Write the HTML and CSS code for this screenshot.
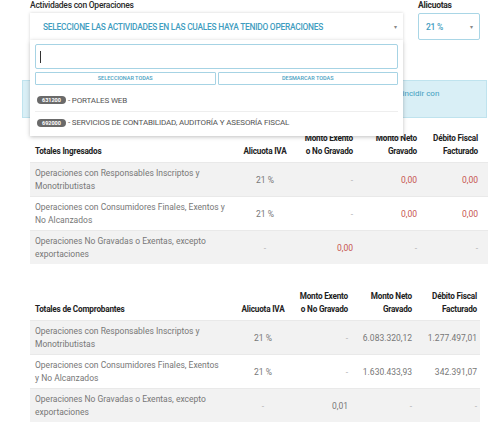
FILE: index.html
```html
<!DOCTYPE html>
<html lang="es">
<head>
<meta charset="utf-8">
<title>Actividades</title>
<link rel="stylesheet" href="styles.css">
</head>
<body>
<div class="page">
  <div class="filters">
    <div class="field field-act">
      <div class="label">Actividades con Operaciones</div>
      <div class="select select-act">
        <span class="select-text">SELECCIONE LAS ACTIVIDADES EN LAS CUALES HAYA TENIDO OPERACIONES</span>
        <span class="caret">&#9662;</span>
      </div>
      <div class="dropdown">
        <div class="search"><span class="cursor"></span></div>
        <div class="actions">
          <div class="btn">SELECCIONAR TODAS</div>
          <div class="btn">DESMARCAR TODAS</div>
        </div>
        <ul class="options">
          <li class="option"><span class="badge">631200</span><span class="opt-text">- PORTALES WEB</span></li>
          <li class="option"><span class="badge">692000</span><span class="opt-text">- SERVICIOS DE CONTABILIDAD, AUDITORÍA Y ASESORÍA FISCAL</span></li>
        </ul>
      </div>
    </div>
    <div class="field field-alic">
      <div class="label">Alicuotas</div>
      <div class="select select-alic">
        <span class="select-text">21 %</span>
        <span class="caret">&#9662;</span>
      </div>
    </div>
  </div>

  <div class="info">Los importes informados para cada una de las actividades seleccionadas en este formulario deberán coincidir con</div>

  <table class="totals t1">
    <colgroup><col class="c-desc"><col class="c-alic"><col class="c-ex"><col class="c-neto"><col class="c-deb"></colgroup>
    <thead>
      <tr>
        <th class="desc">Totales Ingresados</th>
        <th class="alic">Alicuota IVA</th>
        <th class="num">Monto Exento<br>o No Gravado</th>
        <th class="num">Monto Neto<br>Gravado</th>
        <th class="num">Débito Fiscal<br>Facturado</th>
      </tr>
    </thead>
    <tbody>
      <tr>
        <td class="desc">Operaciones con Responsables Inscriptos y<br>Monotributistas</td>
        <td class="alic">21 %</td>
        <td class="num dash">-</td>
        <td class="num red">0,00</td>
        <td class="num red">0,00</td>
      </tr>
      <tr>
        <td class="desc">Operaciones con Consumidores Finales, Exentos y<br>No Alcanzados</td>
        <td class="alic">21 %</td>
        <td class="num dash">-</td>
        <td class="num red">0,00</td>
        <td class="num red">0,00</td>
      </tr>
      <tr>
        <td class="desc">Operaciones No Gravadas o Exentas, excepto<br>exportaciones</td>
        <td class="alic dash">-</td>
        <td class="num red">0,00</td>
        <td class="num dash">-</td>
        <td class="num dash">-</td>
      </tr>
    </tbody>
  </table>

  <table class="totals t2">
    <colgroup><col class="c-desc"><col class="c-alic"><col class="c-ex"><col class="c-neto"><col class="c-deb"></colgroup>
    <thead>
      <tr>
        <th class="desc">Totales de Comprobantes</th>
        <th class="alic">Alicuota IVA</th>
        <th class="num">Monto Exento<br>o No Gravado</th>
        <th class="num">Monto Neto<br>Gravado</th>
        <th class="num">Débito Fiscal<br>Facturado</th>
      </tr>
    </thead>
    <tbody>
      <tr>
        <td class="desc">Operaciones con Responsables Inscriptos y<br>Monotributistas</td>
        <td class="alic">21 %</td>
        <td class="num dash">-</td>
        <td class="num">6.083.320,12</td>
        <td class="num">1.277.497,01</td>
      </tr>
      <tr>
        <td class="desc">Operaciones con Consumidores Finales, Exentos<br>y No Alcanzados</td>
        <td class="alic">21 %</td>
        <td class="num dash">-</td>
        <td class="num">1.630.433,93</td>
        <td class="num">342.391,07</td>
      </tr>
      <tr>
        <td class="desc">Operaciones No Gravadas o Exentas, excepto<br>exportaciones</td>
        <td class="alic dash">-</td>
        <td class="num">0,01</td>
        <td class="num dash">-</td>
        <td class="num dash">-</td>
      </tr>
    </tbody>
  </table>
</div>
</body>
</html>
```

FILE: styles.css
```css
* { box-sizing: border-box; }

body {
  margin: 0;
  background: #fff;
  font-family: Roboto, "Liberation Sans", sans-serif;
  color: #333;
}

.page {
  width: 500px;
  height: 432px;
  overflow: hidden;
}

/* ---------- filters ---------- */
.filters {
  display: flex;
  gap: 15px;
  padding-left: 30px;
}

.field { position: relative; }
.field-act { width: 373px; }
.field-alic { width: 62px; }

.label {
  font-size: 8.5px;
  line-height: 11px;
  font-weight: 500;
  color: #2a2a2a;
  letter-spacing: -0.25px;
  margin-bottom: 2px;
}
.field-alic .label { font-weight: 700; }

.select {
  height: 27px;
  display: flex;
  align-items: center;
  justify-content: space-between;
  background: #fff;
  color: #3f9dc0;
  font-size: 8.4px;
  font-weight: 500;
  letter-spacing: -0.25px;
}
.select-act {
  padding: 0 6px 0 13px;
  box-shadow: 0 0 3px rgba(0, 0, 0, 0.18);
}
.select-alic {
  padding: 0 6px 0 7px;
  border: 1px solid #a9d6e6;
  border-radius: 2px;
  font-size: 8.5px;
}
.caret {
  font-size: 6px;
  color: #888;
}

/* ---------- dropdown ---------- */
.dropdown {
  position: absolute;
  left: 0;
  top: 40px;
  width: 373px;
  height: 96px;
  background: #fff;
  box-shadow: 0 1px 4px rgba(0, 0, 0, 0.25);
  padding: 4px 5px 0;
  z-index: 5;
}
.search {
  height: 25px;
  border: 1.5px solid #a6d3e4;
  border-radius: 2px;
  display: flex;
  align-items: center;
  padding-left: 4px;
}
.cursor {
  width: 1px;
  height: 12px;
  background: #333;
}
.actions {
  display: flex;
  gap: 2px;
  margin-top: 3px;
}
.btn {
  flex: 1;
  height: 13px;
  border: 1px solid #a6d3e4;
  border-radius: 1px;
  color: #4a9fc2;
  font-size: 5.5px;
  line-height: 11px;
  text-align: center;
  font-weight: 500;
}
.options {
  list-style: none;
  margin: 0;
  padding: 0;
}
.option {
  display: flex;
  align-items: center;
  gap: 2px;
  padding-left: 2px;
  font-size: 8px;
  color: #555;
  letter-spacing: -0.15px;
  white-space: nowrap;
}
.option:first-child { height: 26px; padding-top: 4px; }
.option + .option { height: 22px; border-top: 1px solid #eee; }
.badge {
  display: inline-block;
  background: #6a6a6a;
  color: #fff;
  font-size: 5.5px;
  line-height: 8px;
  height: 8px;
  padding: 0 5px;
  border-radius: 4px;
  font-weight: 700;
  letter-spacing: 0;
}

/* ---------- info ---------- */
.info {
  margin: 40px 0 0 22px;
  width: 465px;
  height: 38px;
  background: #d9eff6;
  border: 1px solid #bfe3ee;
  color: #3f9dc0;
  font-size: 8px;
  line-height: 12px;
  padding: 7px 10px 6px;
  overflow: hidden;
  white-space: nowrap;
}

/* ---------- tables ---------- */
.totals {
  border-collapse: collapse;
  table-layout: fixed;
  margin-left: 30px;
}
.t1 { width: 458px; margin-top: 11px; }
.t2 { width: 450px; margin-top: 23px; }

.t1 .c-desc { width: 210px; }
.t1 .c-alic { width: 50px; }
.t1 .c-ex { width: 73px; }
.t1 .c-neto { width: 64px; }
.t1 .c-deb { width: 61px; }

.t2 .c-desc { width: 208px; }
.t2 .c-alic { width: 50px; }
.t2 .c-ex { width: 70px; }
.t2 .c-neto { width: 64px; }
.t2 .c-deb { width: 58px; }

.totals th {
  font-size: 8.2px;
  font-weight: 700;
  color: #222;
  line-height: 13px;
  padding: 3px 10px 4px;
  vertical-align: bottom;
  white-space: nowrap;
  letter-spacing: -0.2px;
}
.totals td {
  font-size: 8.5px;
  color: #777;
  line-height: 13px;
  padding: 4px 10px 3px;
  vertical-align: middle;
  white-space: nowrap;
  border-top: 1px solid #e9e9e9;
}
.totals tbody tr:nth-child(odd) { background: #f2f2f2; }

.totals .desc { text-align: left; padding-left: 5px; }
.totals .alic { text-align: center; padding-left: 0; padding-right: 0; }
.totals .num { text-align: right; padding-left: 0; }
.t2 .num:last-child { padding-right: 3px; }

.totals .red { color: #c65450; }
.totals .dash { color: #b5b5b5; }
```
